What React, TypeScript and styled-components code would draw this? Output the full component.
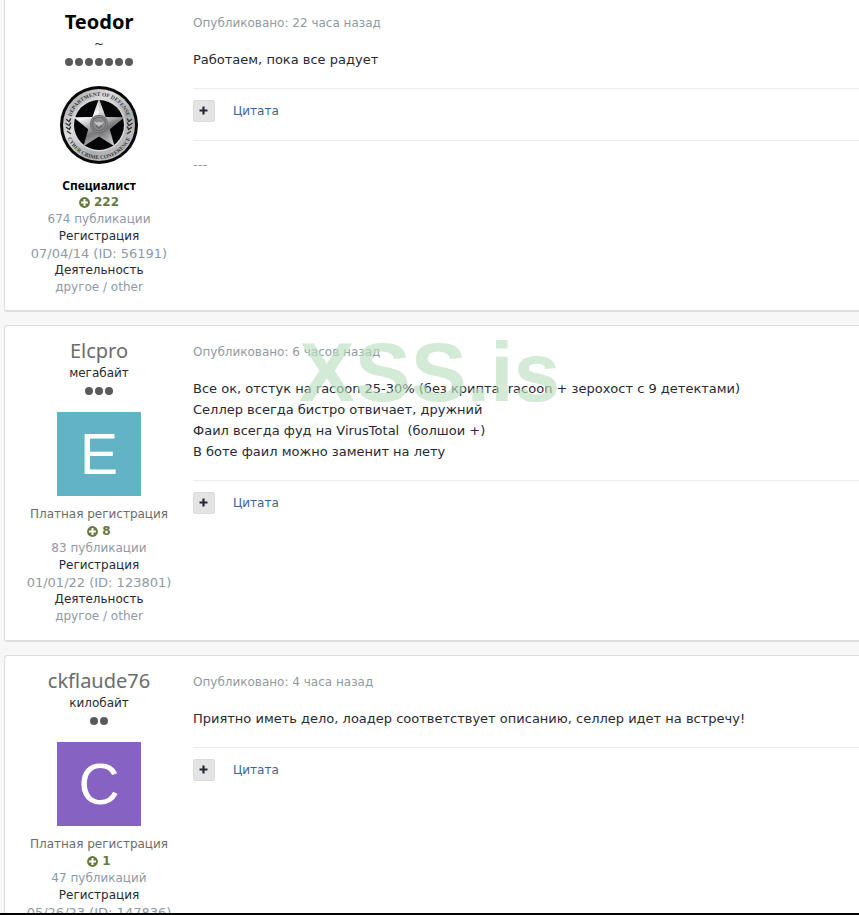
import React from "react";
import styled, { createGlobalStyle, css } from "styled-components";

const text = `"DejaVu Sans", Verdana, sans-serif`;
const narrow = `"Noto Sans", Tahoma, sans-serif`;

const GlobalStyle = createGlobalStyle`
  *, *::before, *::after { box-sizing: border-box; }
  body {
    margin: 0;
    background: #f7f7f7;
    color: #272a34;
    font-family: ${text};
    font-size: 12px;
    line-height: 17px;
  }
`;

const Page = styled.div`
  position: relative;
  height: 100vh;
  overflow: hidden;
  border-bottom: 2px solid #000;
`;

const Feed = styled.main`
  display: flex;
  flex-direction: column;
  gap: 13px;
  padding-left: 4px;
`;

const PostCard = styled.article<{ $continued?: boolean }>`
  display: flex;
  flex-shrink: 0;
  background: #fff;
  border: 1px solid #dedede;
  border-width: 1px 0 2px 1px;
  border-radius: 3px 0 0 3px;
  padding: 14px 0 15px;
  ${(p) =>
    p.$continued &&
    css`
      border-top: 0;
      border-top-left-radius: 0;
      padding: 11px 0 14px;
    `}
`;

const Author = styled.aside`
  width: 188px;
  flex-shrink: 0;
  display: flex;
  flex-direction: column;
  align-items: center;
  text-align: center;
`;

const Name = styled.h3<{ $staff?: boolean }>`
  margin: 0;
  font-family: ${narrow};
  font-size: 20px;
  line-height: 22px;
  font-weight: ${(p) => (p.$staff ? 700 : 400)};
  color: ${(p) => (p.$staff ? "#000" : "#6c6c6c")};
`;

const Rank = styled.div`
  line-height: 22px;
`;

const Pips = styled.div`
  display: flex;
  gap: 2px;
  padding: 3px 0 17px;
`;

const Pip = styled.span`
  width: 8px;
  height: 8px;
  border-radius: 50%;
  background: #5a5a5a;
`;

const Avatar = styled.div<{ $color: string }>`
  display: flex;
  align-items: center;
  justify-content: center;
  width: 84px;
  height: 84px;
  margin-bottom: 10px;
  background: ${(p) => p.$color};
  color: #fff;
  font-family: "Liberation Sans", Arial, sans-serif;
  font-size: 57px;
  line-height: 84px;
`;

const Group = styled.div<{ $staff?: boolean }>`
  font-family: ${(p) => (p.$staff ? narrow : text)};
  font-weight: ${(p) => (p.$staff ? 700 : 400)};
  color: ${(p) => (p.$staff ? "#000" : "#6c6c6c")};
`;

const Reputation = styled.div`
  display: flex;
  align-items: center;
  gap: 4px;
  font-weight: 700;
  color: #66793f;
`;

const Fact = styled.div<{ $muted?: boolean; $numeric?: boolean }>`
  color: ${(p) => (p.$muted ? "#8f9aa3" : "#272a34")};
  font-size: ${(p) => (p.$numeric ? "13px" : "12px")};
`;

const Body = styled.div`
  flex: 1;
  min-width: 0;
  padding-top: 4px;
`;

const Published = styled.div`
  color: #8f9aa3;
`;

const Message = styled.p`
  margin: 0;
  padding: 17px 0 18px;
  font-size: 13px;
  line-height: 21px;
  white-space: pre-wrap;
`;

const Controls = styled.div`
  display: flex;
  align-items: center;
  gap: 18px;
  padding: 11px 0 18px;
  border-top: 1px solid #ebebeb;
`;

const PlusButton = styled.button`
  display: flex;
  align-items: center;
  justify-content: center;
  width: 22px;
  height: 22px;
  padding: 0;
  border: 1px solid #dcdcdc;
  border-radius: 2px;
  background: #e4e4e4;
  color: #272a34;
`;

const QuoteLink = styled.a`
  color: #3d6594;
  text-decoration: none;
`;

const Signature = styled.div`
  padding-top: 15px;
  border-top: 1px solid #ebebeb;
  font-size: 13px;
  color: #8f9aa3;
`;

const Watermark = styled.div`
  position: absolute;
  top: 324px;
  left: 50%;
  transform: translateX(-50%);
  font-family: "Liberation Sans", Arial, sans-serif;
  font-size: 84px;
  line-height: 96px;
  font-weight: 700;
  color: rgba(186, 223, 192, 0.65);
  pointer-events: none;
`;

function Badge() {
  return (
    <svg width="84" height="84" viewBox="0 0 84 84" role="img" aria-label="Department of Defense Cyber Crime Conference">
      <defs>
        <linearGradient id="ring" x1="0" y1="0" x2="1" y2="1">
          <stop offset="0" stopColor="#9a9a9c" />
          <stop offset="0.35" stopColor="#dededf" />
          <stop offset="0.65" stopColor="#acacae" />
          <stop offset="1" stopColor="#cfcfd0" />
        </linearGradient>
        <linearGradient id="star" x1="0.2" y1="0" x2="0.6" y2="1">
          <stop offset="0" stopColor="#b4b4b6" />
          <stop offset="0.35" stopColor="#f6f6f6" />
          <stop offset="0.7" stopColor="#77777b" />
          <stop offset="1" stopColor="#d2d2d4" />
        </linearGradient>
        <path id="upper" d="M13 42a29 29 0 0 1 58 0" />
        <path id="lower" d="M8 42a34 34 0 0 0 68 0" />
      </defs>
      <circle cx="42" cy="42" r="39" fill="#08080b" />
      <circle cx="42" cy="42" r="36" fill="url(#ring)" />
      <circle cx="42" cy="42" r="26.5" fill="#d9d9da" />
      <circle cx="42" cy="42" r="25" fill="#050508" />
      <path d="M42 15.5 48.6 34 67.5 34.2 52.8 46.2 57.5 63.2 42 53.6 26.5 63.2 31.2 46.2 16.5 34.2 35.4 34Z" fill="url(#star)" />
      <path d="M42 15.5 48.6 34 42 42ZM67.5 34.2 52.8 46.2 42 42ZM42 53.6 57.5 63.2 42 42Z" fill="#55555a" fillOpacity="0.15" />
      <circle cx="42" cy="41" r="9.2" fill="#6b6b6f" />
      <circle cx="42" cy="41" r="7.8" fill="none" stroke="#bdbdc0" strokeWidth="0.8" strokeDasharray="1 0.7" />
      <circle cx="42" cy="41" r="6.2" fill="#88888b" />
      <path d="M36.8 38.6 40.4 39.6 42 38.8 43.6 39.6 47.2 38.6 44.8 41.4 42 43 39.2 41.4Z" fill="#c4c4c7" />
      <path d="M39 42.8 42 45.4 45 42.8" fill="none" stroke="#454549" strokeWidth="0.8" />
      <g stroke="#303034" strokeWidth="1.4" strokeLinecap="round">
        <path d="M9.5 36.5 12 38.5M9 40.5 12 42.5M9.5 44.5 12.5 46.5M10.5 48.5 13.5 50.5M13.5 36 12.5 38M13.5 40 12.5 42M13.5 44 12.5 46" />
        <path d="M74.5 36.5 72 38.5M75 40.5 72 42.5M74.5 44.5 71.5 46.5M73.5 48.5 70.5 50.5M70.5 36 71.5 38M70.5 40 71.5 42M70.5 44 71.5 46" />
      </g>
      <g fontFamily="Liberation Serif, Times New Roman, serif" fontWeight="700" fontSize="5.5" fill="#39393d" textAnchor="middle">
        <text>
          <textPath href="#upper" startOffset="50%">DEPARTMENT OF DEFENSE</textPath>
        </text>
        <text>
          <textPath href="#lower" startOffset="50%">CYBER CRIME CONFERENCE</textPath>
        </text>
      </g>
    </svg>
  );
}

const BadgeFrame = styled.div`
  height: 84px;
  margin-bottom: 10px;
`;

const PlusCircle = () => (
  <svg width="11" height="11" viewBox="0 0 11 11" aria-hidden="true">
    <circle cx="5.5" cy="5.5" r="5.4" fill="currentColor" />
    <path d="M5.5 2.1V8.9M2.1 5.5H8.9" stroke="#fff" strokeWidth="2" />
  </svg>
);

const Plus = () => (
  <svg width="10" height="10" viewBox="0 0 10 10" aria-hidden="true">
    <path d="M4.5 0.5V8.5M0.5 4.5H8.5" stroke="currentColor" strokeWidth="2.2" />
  </svg>
);

interface Post {
  name: string;
  staff?: boolean;
  rank: string;
  pips: number;
  avatar?: { letter: string; color: string };
  group: string;
  reputation: number;
  posts: string;
  registered: string;
  activity: string;
  published: string;
  message: string;
  signature?: string;
}

const posts: Post[] = [
  {
    name: "Teodor",
    staff: true,
    rank: "~",
    pips: 7,
    group: "Специалист",
    reputation: 222,
    posts: "674 публикации",
    registered: "07/04/14 (ID: 56191)",
    activity: "другое / other",
    published: "22 часа назад",
    message: "Работаем, пока все радует",
    signature: "---",
  },
  {
    name: "Elcpro",
    rank: "мегабайт",
    pips: 3,
    avatar: { letter: "E", color: "#62b4c5" },
    group: "Платная регистрация",
    reputation: 8,
    posts: "83 публикации",
    registered: "01/01/22 (ID: 123801)",
    activity: "другое / other",
    published: "6 часов назад",
    message:
      "Все ок, отстук на racoon 25-30% (без крипта  racoon + зерохост с 9 детектами)\nСеллер всегда бистро отвичает, дружний\nФаил всегда фуд на VirusTotal  (болшои +)\nВ боте фаил можно заменит на лету",
  },
  {
    name: "ckflaude76",
    rank: "килобайт",
    pips: 2,
    avatar: { letter: "C", color: "#8662c2" },
    group: "Платная регистрация",
    reputation: 1,
    posts: "47 публикаций",
    registered: "05/26/23 (ID: 147836)",
    activity: "другое / other",
    published: "4 часа назад",
    message: "Приятно иметь дело, лоадер соответствует описанию, селлер идет на встречу!",
  },
];

export default function App() {
  return (
    <Page>
      <GlobalStyle />
      <Feed>
        {posts.map((post, index) => (
          <PostCard key={post.name} $continued={index === 0}>
            <Author>
              <Name $staff={post.staff}>{post.name}</Name>
              <Rank>{post.rank}</Rank>
              <Pips>
                {Array.from({ length: post.pips }, (_, i) => (
                  <Pip key={i} />
                ))}
              </Pips>
              {post.avatar ? (
                <Avatar $color={post.avatar.color}>{post.avatar.letter}</Avatar>
              ) : (
                <BadgeFrame>
                  <Badge />
                </BadgeFrame>
              )}
              <Group $staff={post.staff}>{post.group}</Group>
              <Reputation>
                <PlusCircle />
                {post.reputation}
              </Reputation>
              <Fact $muted>{post.posts}</Fact>
              <Fact>Регистрация</Fact>
              <Fact $muted $numeric>
                {post.registered}
              </Fact>
              <Fact>Деятельность</Fact>
              <Fact $muted>{post.activity}</Fact>
            </Author>
            <Body>
              <Published>Опубликовано: {post.published}</Published>
              <Message>{post.message}</Message>
              <Controls>
                <PlusButton type="button" aria-label="Нравится">
                  <Plus />
                </PlusButton>
                <QuoteLink href="#quote">Цитата</QuoteLink>
              </Controls>
              {post.signature && <Signature>{post.signature}</Signature>}
            </Body>
          </PostCard>
        ))}
      </Feed>
      <Watermark aria-hidden="true">XSS.is</Watermark>
    </Page>
  );
}
